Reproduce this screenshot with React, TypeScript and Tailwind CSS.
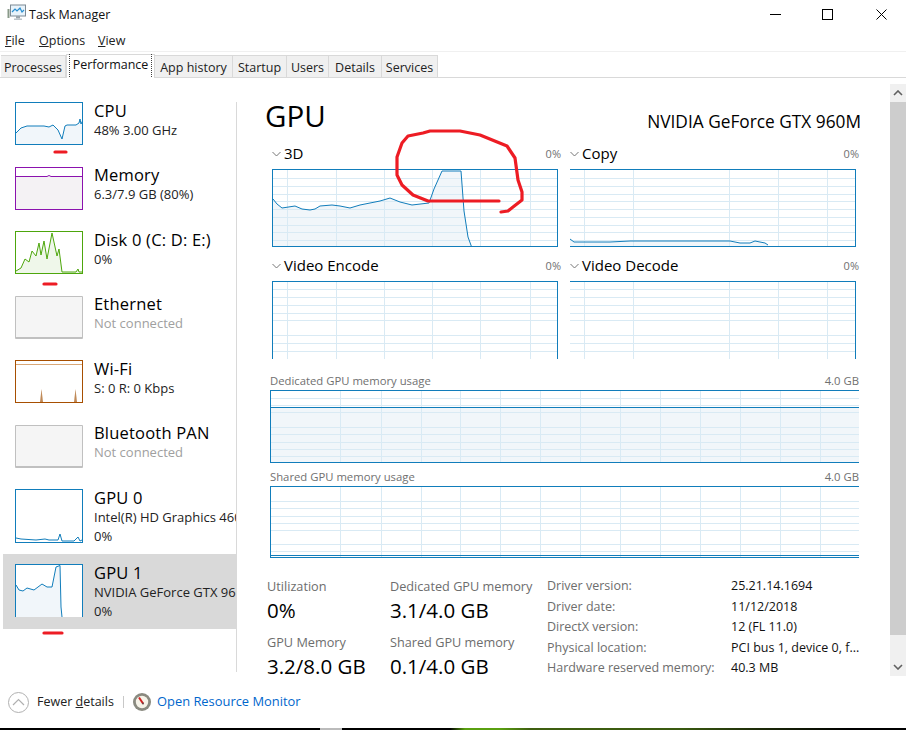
import React from "react";

const BLUE = "#117dbb";
const GRID = "#d9eaf4";

function Grid({ w, h, vs, hs }: { w: number; h: number; vs: number[]; hs: number[] }) {
  return (
    <g shapeRendering="crispEdges" stroke={GRID} strokeWidth={1}>
      {vs.map((x) => (
        <line key={"v" + x} x1={x + 0.5} x2={x + 0.5} y1={0} y2={h} />
      ))}
      {hs.map((y) => (
        <line key={"h" + y} x1={0} x2={w} y1={y + 0.5} y2={y + 0.5} />
      ))}
    </g>
  );
}

function Area({ pts, bottom, fill = "#f1f6fa" }: { pts: number[][]; bottom: number; fill?: string }) {
  const line = pts.map((p) => p.join(",")).join(" ");
  const area = `${pts[0][0]},${bottom} ${line} ${pts[pts.length - 1][0]},${bottom}`;
  return <polygon points={area} fill={fill} />;
}

function Line({ pts, stroke = BLUE, sw = 1 }: { pts: number[][]; stroke?: string; sw?: number }) {
  return <polyline points={pts.map((p) => p.join(",")).join(" ")} fill="none" stroke={stroke} strokeWidth={sw} />;
}

function Curve({
  pts,
  bottom,
  stroke = BLUE,
  fill = "#f1f6fa",
}: {
  pts: number[][];
  bottom: number;
  stroke?: string;
  fill?: string;
}) {
  return (
    <>
      <Area pts={pts} bottom={bottom} fill={fill} />
      <Line pts={pts} stroke={stroke} />
    </>
  );
}

const hsA = [8, 16, 24, 31, 39, 47, 55, 62, 70];
const vsA = [14, 63, 111, 159, 207, 257];
const vsB = [14, 63, 159, 208, 257];
const hsV = [7, 15, 23, 31, 38, 53, 61, 69];
const vsM = [69, 110, 150, 189, 229, 269, 309, 349, 389, 429, 469, 509, 549];

const curve3D = [
  [0, 29], [4, 34], [9, 38], [22, 36], [29, 39], [37, 40], [42, 39], [47, 36], [59, 35], [67, 36],
  [77, 38], [87, 35], [97, 33], [107, 31], [117, 28], [127, 32], [139, 35], [156, 33], [161, 19],
  [169, 1], [188, 1], [191, 41], [195, 67], [199, 78],
];
const curveCopy = [
  [0, 69], [4, 72], [40, 72], [60, 71], [120, 71], [160, 71], [170, 73], [180, 73], [185, 71], [195, 73], [198, 75],
];

function Chevron() {
  return (
    <svg width="9" height="6" viewBox="0 0 9 6" className="mr-[3px] shrink-0">
      <polyline points="0.5,1 4.5,5 8.5,1" fill="none" stroke="#777" strokeWidth="1" />
    </svg>
  );
}

function Engine({ label, children }: { label: string; children: React.ReactNode }) {
  return (
    <div className="w-[298px] shrink-0">
      <div className="w-[289px] h-[18px] mb-[6px] flex items-center">
        <Chevron />
        <span className="text-[15px] leading-[18px] -mt-[2px] text-black">{label}</span>
        <span className="ml-auto text-[11px] text-[#707070]">0%</span>
      </div>
      {children}
    </div>
  );
}

function SideItem({
  title,
  lines,
  thumb,
  tall,
  selected,
  muted,
  first,
}: {
  title: string;
  lines: string[];
  thumb: React.ReactNode;
  tall?: boolean;
  selected?: boolean;
  muted?: boolean;
  first?: boolean;
}) {
  return (
    <div
      className={
        (tall ? "h-[75px] " : "h-[64.5px] ") +
        (selected ? "bg-[#d9d9d9] " : "") +
        (first ? "-mt-[10px] " : "") +
        "flex items-start pl-[12px] pt-[10px] overflow-hidden"
      }
    >
      {thumb}
      <div className="ml-[11px] -mt-[1.5px] whitespace-nowrap">
        <div className="text-[16.5px] leading-[20px] tracking-[0.2px] text-black">{title}</div>
        {lines.map((l) => (
          <div key={l} className={"text-[13px] leading-[19px] " + (muted ? "text-[#a0a0a0]" : "text-[#222]")}>
            {l}
          </div>
        ))}
      </div>
    </div>
  );
}

function Thumb({ cls, h = 41, children }: { cls: string; h?: number; children?: React.ReactNode }) {
  return (
    <div className={"w-[68px] shrink-0 " + cls}>
      <svg width="66" height={h} className="block overflow-hidden">
        {children}
      </svg>
    </div>
  );
}

function Stat({ label, value }: { label: string; value: string }) {
  return (
    <div className="mb-[9px]">
      <div className="text-[12.7px] leading-[18px] text-[#6d6d6d] whitespace-nowrap">{label}</div>
      <div className="text-[20.5px] leading-[27px] mt-[2px] text-black whitespace-nowrap">{value}</div>
    </div>
  );
}

const tabs = [
  { t: "Processes", c: "w-[65px] ml-[1px]" },
  { t: "App history", c: "w-[78px]" },
  { t: "Startup", c: "w-[54px]" },
  { t: "Users", c: "w-[42px]" },
  { t: "Details", c: "w-[53px]" },
  { t: "Services", c: "w-[56px]" },
];

function Tab({ t, c }: { t: string; c: string }) {
  return (
    <div
      className={
        c +
        " h-[22px] pt-[3px] bg-[#f0f0f0] border-r border-t border-[#d9d9d9] flex items-center justify-center text-[12.5px] text-[#222] whitespace-nowrap"
      }
    >
      {t}
    </div>
  );
}

const info = [
  ["Driver version:", "25.21.14.1694"],
  ["Driver date:", "11/12/2018"],
  ["DirectX version:", "12 (FL 11.0)"],
  ["Physical location:", "PCI bus 1, device 0, f..."],
  ["Hardware reserved memory:", "40.3 MB"],
];

export default function App() {
  return (
    <div
      className="relative w-[906px] h-[730px] overflow-hidden bg-white flex flex-col text-black"
      style={{ fontFamily: '"Open Sans", "Noto Sans", sans-serif' }}
    >
      {/* title bar */}
      <div className="h-[28px] flex items-center shrink-0">
        <svg width="20" height="18" viewBox="0 0 20 18" className="ml-[7px] -mt-[2px]">
          <rect x="0.5" y="5" width="2" height="9" fill="#8a9a8a" />
          <rect x="3.5" y="1" width="15" height="11" fill="#e8f3fb" stroke="#7d8a94" />
          <polyline points="5,8 8,5 10,7 13,4 15,8 17,6" fill="none" stroke="#2a8fd0" strokeWidth="1.2" />
          <rect x="9" y="12" width="4" height="2.5" fill="#9aa4ac" />
          <rect x="7" y="14.5" width="8" height="1.5" fill="#bcc4ca" />
        </svg>
        <span className="ml-[2px] mt-[2px] text-[12.5px] text-[#111]">Task Manager</span>
        <div className="ml-auto pr-[19px] flex items-center">
          <svg width="11" height="11" viewBox="0 0 11 11">
            <line x1="0" x2="11" y1="5.5" y2="5.5" stroke="#000" />
          </svg>
          <svg width="11" height="11" viewBox="0 0 11 11" className="ml-[41px]">
            <rect x="0.5" y="0.5" width="10" height="10" fill="none" stroke="#000" />
          </svg>
          <svg width="11" height="11" viewBox="0 0 11 11" className="ml-[43px]">
            <path d="M0.5 0.5 L10.5 10.5 M10.5 0.5 L0.5 10.5" stroke="#000" />
          </svg>
        </div>
      </div>

      {/* menu */}
      <div className="h-[24px] shrink-0 flex items-center border-b border-[#f0f0f0] text-[12.5px] text-[#222] pl-[5px] pt-[3px]">
        <span className="w-[34px]"><u>F</u>ile</span>
        <span className="w-[59px]"><u>O</u>ptions</span>
        <span><u>V</u>iew</span>
      </div>

      {/* tabs */}
      <div className="h-[26px] shrink-0 flex items-end border-b border-[#d9d9d9] relative">
        <Tab {...tabs[0]} />
        <div className="w-[89px] h-[24px] bg-white border border-b-0 border-[#d9d9d9] -mb-[1px] flex items-stretch px-[2px] py-[1px] relative z-10">
          <div className="flex-1 border-x border-dotted border-[#444] flex items-center justify-center text-[12.5px] text-[#111] whitespace-nowrap -mt-[2px]">
            Performance
          </div>
        </div>
        {tabs.slice(1).map((t) => (
          <Tab key={t.t} {...t} />
        ))}
      </div>

      {/* body */}
      <div className="h-[602px] shrink-0 flex">
        <aside className="w-[237px] shrink-0 mt-[24px] h-[570px] border-r border-[#d9d9d9] pl-[3px]">
          <SideItem
            first
            title="CPU"
            lines={["48%  3.00 GHz"]}
            thumb={
              <Thumb cls="border border-[#117dbb]">
                <Curve
                  bottom={41}
                  pts={[
                    [0, 30], [5, 25], [11, 23], [21, 23], [28, 23], [33, 24], [37, 22], [42, 27], [46, 36],
                    [49, 23], [51, 22], [60, 22], [63, 20], [64, 16], [65, 21], [67, 17],
                  ]}
                />
              </Thumb>
            }
          />
          <SideItem
            title="Memory"
            lines={["6.3/7.9 GB (80%)"]}
            thumb={
              <Thumb cls="border border-[#8b12ae]">
                <Curve
                  bottom={41}
                  stroke="#8b12ae"
                  fill="#f4f2f4"
                  pts={[[0, 8.5], [31, 8.5], [33, 7.5], [35, 8.5], [66, 8.5]]}
                />
              </Thumb>
            }
          />
          <SideItem
            title="Disk 0 (C: D: E:)"
            lines={["0%"]}
            thumb={
              <Thumb cls="border border-[#4da60c]">
                <Curve
                  bottom={41}
                  stroke="#4da60c"
                  fill="#eff7ea"
                  pts={[
                    [0, 39], [5, 36], [9, 27], [13, 30], [16, 19], [20, 24], [23, 11], [25, 23], [28, 9], [31, 27],
                    [36, 1], [41, 24], [43, 17], [46, 40], [60, 40], [62, 37], [63, 40], [66, 40],
                  ]}
                />
              </Thumb>
            }
          />
          <SideItem
            title="Ethernet"
            lines={["Not connected"]}
            muted
            thumb={<div className="w-[68px] h-[43px] shrink-0 bg-[#f5f5f5] border border-b-2 border-[#c0c0c0] rounded-[1px]" />}
          />
          <SideItem
            title="Wi-Fi"
            lines={["S: 0 R: 0 Kbps"]}
            thumb={
              <Thumb cls="border border-[#a74f01]">
                <line x1="0" x2="66" y1="3.5" y2="3.5" stroke="#d9a878" />
                <polygon points="24,41 25.5,28 27,41" fill="#c08a58" />
                <polygon points="58,41 59.5,28 61,41" fill="#c08a58" />
              </Thumb>
            }
          />
          <SideItem
            title="Bluetooth PAN"
            lines={["Not connected"]}
            muted
            thumb={<div className="w-[68px] h-[43px] shrink-0 bg-[#f5f5f5] border border-b-2 border-[#c0c0c0] rounded-[1px]" />}
          />
          <SideItem
            tall
            title="GPU 0"
            lines={["Intel(R) HD Graphics 4600", "0%"]}
            thumb={
              <Thumb cls="border border-[#117dbb]" h={52}>
                <Curve
                  bottom={52}
                  fill="#ffffff"
                  pts={[
                    [0, 48], [5, 49], [20, 50], [29, 49], [33, 50], [42, 50], [44, 44], [46, 51], [58, 51],
                    [62, 47], [64, 51], [66, 50],
                  ]}
                />
              </Thumb>
            }
          />
          <SideItem
            tall
            selected
            title="GPU 1"
            lines={["NVIDIA GeForce GTX 960M", "0%"]}
            thumb={
              <div className="w-[68px] h-[53px] shrink-0 bg-white border border-b-0 border-[#117dbb]">
                <svg width="66" height="52" className="block">
                  <Curve
                    bottom={52}
                    pts={[
                      [0, 20], [3, 25], [7, 26], [11, 23], [18, 25], [26, 19], [31, 22], [36, 22], [40, 2],
                      [44, 0.5], [45, 42], [46, 52],
                    ]}
                  />
                </svg>
              </div>
            }
          />
        </aside>

        <main className="w-[653px] shrink-0 pl-[28px] overflow-hidden">
          <div className="h-[67px] pt-[20px] pr-[29px] flex items-start justify-between">
            <h1 className="text-[29.5px] leading-[36px] font-normal">GPU</h1>
            <span className="mt-[12px] text-[17.3px] leading-[24px] whitespace-nowrap">NVIDIA GeForce GTX 960M</span>
          </div>

          <div className="ml-[7px] flex">
            <Engine label="3D">
              <div className="w-[286px] h-[78px] border border-[#117dbb]">
                <svg width="284" height="76" className="block">
                  <Area bottom={76} pts={curve3D} />
                  <Grid w={284} h={76} vs={vsA} hs={hsA} />
                  <Line pts={curve3D} />
                </svg>
              </div>
            </Engine>
            <Engine label="Copy">
              <div className="w-[286px] h-[78px] border border-l-0 border-[#117dbb]">
                <svg width="285" height="76" className="block">
                  <Area bottom={76} pts={curveCopy} />
                  <Grid w={285} h={76} vs={vsB} hs={hsA} />
                  <Line pts={curveCopy} />
                </svg>
              </div>
            </Engine>
          </div>

          <div className="ml-[7px] mt-[10px] flex">
            <Engine label="Video Encode">
              <div className="w-[286px] h-[78px] border border-b-0 border-[#117dbb]">
                <svg width="284" height="77" className="block">
                  <Grid w={284} h={77} vs={vsA} hs={hsV} />
                </svg>
              </div>
            </Engine>
            <Engine label="Video Decode">
              <div className="w-[286px] h-[78px] border-t border-r border-[#117dbb]">
                <svg width="285" height="77" className="block">
                  <Grid w={285} h={77} vs={vsB} hs={hsV} />
                </svg>
              </div>
            </Engine>
          </div>

          <div className="ml-[5px] w-[589px] mt-[13px]">
            <div className="h-[18px] flex items-center justify-between text-[11.3px] text-[#707070]">
              <span>Dedicated GPU memory usage</span>
              <span>4.0 GB</span>
            </div>
            <div className="h-[73px] border-t border-l border-b border-[#117dbb]">
              <svg width="588" height="71" className="block">
                <rect x="0" y="16" width="588" height="55" fill="#f1f6fa" />
                <Grid w={588} h={71} vs={vsM} hs={[7, 14, 21, 36, 43, 51, 58, 65]} />
                <line x1="0" x2="588" y1="16.5" y2="16.5" stroke={BLUE} />
              </svg>
            </div>
            <div className="mt-[5px] h-[18px] flex items-center justify-between text-[11.3px] text-[#707070]">
              <span>Shared GPU memory usage</span>
              <span>4.0 GB</span>
            </div>
            <div className="h-[72px] border-t border-l border-b border-[#117dbb]">
              <svg width="588" height="70" className="block">
                <Grid w={588} h={70} vs={vsM} hs={[14, 21, 29, 36, 43, 57, 64]} />
                <line x1="0" x2="588" y1="68.5" y2="68.5" stroke={BLUE} />
              </svg>
            </div>
          </div>

          <div className="ml-[2px] mt-[19px] flex">
            <div className="w-[123px] shrink-0">
              <Stat label="Utilization" value="0%" />
              <Stat label="GPU Memory" value="3.2/8.0 GB" />
            </div>
            <div className="w-[157px] shrink-0">
              <Stat label="Dedicated GPU memory" value="3.1/4.0 GB" />
              <Stat label="Shared GPU memory" value="0.1/4.0 GB" />
            </div>
            <div className="grid grid-cols-[184px_auto] auto-rows-[20.5px] text-[12.5px] leading-[18px]">
              {info.map(([k, v]) => (
                <React.Fragment key={k}>
                  <div className="text-[#6d6d6d] whitespace-nowrap">{k}</div>
                  <div className="text-[#111] whitespace-nowrap">{v}</div>
                </React.Fragment>
              ))}
            </div>
          </div>
        </main>

        <div className="w-[16px] shrink-0 mt-[6px] h-[592px] flex flex-col bg-[#f0f0f0]">
          <div className="h-[18px] flex items-center justify-center">
            <svg width="10" height="6" viewBox="0 0 10 6">
              <polyline points="1,5 5,1 9,5" fill="none" stroke="#606060" strokeWidth="1.6" />
            </svg>
          </div>
          <div className="h-[533px] bg-[#cdcdcd]" />
          <div className="flex-1 flex items-end justify-center pb-[6px]">
            <svg width="10" height="6" viewBox="0 0 10 6">
              <polyline points="1,1 5,5 9,1" fill="none" stroke="#606060" strokeWidth="1.6" />
            </svg>
          </div>
        </div>
      </div>

      {/* footer */}
      <div className="h-[48px] shrink-0 flex items-center pl-[8px] pb-[4px]">
        <svg width="21" height="21" viewBox="0 0 21 21">
          <circle cx="10.5" cy="10.5" r="10" fill="none" stroke="#b0b0b0" />
          <polyline points="5,13 10.5,7.5 16,13" fill="none" stroke="#b0b0b0" strokeWidth="1.2" />
        </svg>
        <span className="ml-[8px] text-[12.5px] text-[#222] w-[86px] whitespace-nowrap">
          Fewer <u>d</u>etails
        </span>
        <div className="w-px h-[12px] bg-[#c8c8c8]" />
        <svg width="18" height="18" viewBox="0 0 18 18" className="ml-[9px]">
          <circle cx="9" cy="9" r="9" fill="#8a8a80" />
          <circle cx="9" cy="9" r="6.2" fill="#f6f3e8" />
          <line x1="6" y1="4.5" x2="10" y2="10.5" stroke="#d02020" strokeWidth="2" />
          <circle cx="10" cy="10.5" r="1" fill="#704040" />
        </svg>
        <span className="ml-[6px] text-[12.9px] text-[#0066cc] whitespace-nowrap">Open Resource Monitor</span>
      </div>

      {/* desktop peeking under the window */}
      <div className="h-[2px] shrink-0 bg-[linear-gradient(90deg,#000_0,#000_320px,#bbb_320px,#bbb_342px,#000_342px,#000_450px,#5aa010_465px,#5aa010_500px,#3f5f10_530px,#3a5a10_680px,#1c2a08_760px,#000_850px)]" />

      {/* hand-drawn red annotations */}
      <svg className="absolute left-0 top-0 pointer-events-none" width="906" height="730">
        <g fill="none" stroke="#ed1c24" strokeWidth="3.2" strokeLinecap="round" strokeLinejoin="round">
          <polyline points="499,201 428,201 413,195 402,185 397,175 397,157 402,143 408,136 423,133 430,131 460,131 480,135 507,146 515,158 518,180 522,192 522,200 513,207 508,211 501,212" />
          <line x1="55" x2="66" y1="152" y2="152" />
          <line x1="44" x2="56" y1="284" y2="284" />
          <line x1="44" x2="62" y1="633" y2="633" />
        </g>
      </svg>
    </div>
  );
}
